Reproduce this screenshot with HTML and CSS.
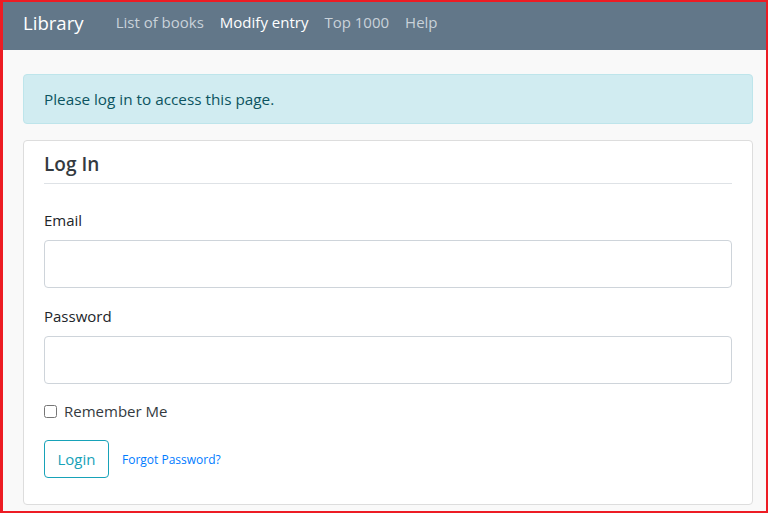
FILE: index.html
```html
<!DOCTYPE html>
<html>
<head>
<meta charset="utf-8">
<link rel="stylesheet" href="styles.css">
</head>
<body>
<div class="frame">
  <nav class="navbar">
    <span class="brand">Library</span>
    <a class="nav-link">List of books</a>
    <a class="nav-link active">Modify entry</a>
    <a class="nav-link">Top 1000</a>
    <a class="nav-link">Help</a>
  </nav>
  <main class="content">
    <div class="alert">Please log in to access this page.</div>
    <div class="card">
      <h2 class="card-title">Log In</h2>
      <div class="field first">
        <label class="label">Email</label>
        <input class="input" type="text">
      </div>
      <div class="field">
        <label class="label">Password</label>
        <input class="input" type="password">
      </div>
      <label class="check"><input type="checkbox" class="checkbox"> Remember Me</label>
      <div class="actions">
        <button class="btn">Login</button>
        <a class="forgot">Forgot Password?</a>
      </div>
    </div>
  </main>
</div>
</body>
</html>
```
FILE: styles.css
```css
* { box-sizing: border-box; }
html, body { margin: 0; padding: 0; background: #fff; }
body { font-family: "Open Sans", "Noto Sans", sans-serif; color: #212529; }
.frame {
  width: 768px;
  height: 513px;
  border: 2px solid #ed1c24;
  border-left-width: 3px;
  background: #f9f9f9;
  overflow: hidden;
}
.navbar {
  height: 48px;
  background: #627789;
  display: flex;
  align-items: center;
  padding-left: 20px;
  padding-bottom: 8px;
}
.brand { color: #fff; font-size: 18.6px; margin-right: 32px; }
.nav-link { color: #c9d2da; font-size: 15px; margin-right: 16px; }
.nav-link.active { color: #fff; }
.content { padding: 24px 13px 0 20px; }
.alert {
  background: #d1ecf1;
  border: 1px solid #bee5eb;
  color: #0c5460;
  border-radius: 4px;
  height: 50px;
  padding: 0 20px;
  display: flex;
  align-items: center;
  font-size: 15.3px;
}
.card {
  margin-top: 16px;
  background: #fff;
  border: 1px solid #ddd;
  border-radius: 4px;
  padding: 10px 20px 26px 20px;
  height: 365px;
}
.card-title {
  margin: 0;
  font-size: 19px;
  font-weight: 600;
  color: #343a40;
  padding-bottom: 6px;
  border-bottom: 1px solid #dee2e6;
}
.field { margin-top: 18px; }
.field.first { margin-top: 26px; }
.label { display: block; font-size: 15px; color: #212529; margin-bottom: 10px; }
.input {
  display: block;
  width: 100%;
  height: 48px;
  border: 1px solid #ced4da;
  border-radius: 4px;
  background: #fff;
}
.check {
  display: flex;
  align-items: center;
  gap: 7px;
  margin-top: 17px;
  font-size: 15px;
  color: #343a40;
}
.checkbox { margin: 0; width: 13px; height: 13px; }
.actions { display: flex; align-items: center; gap: 13px; margin-top: 19px; }
.btn {
  font-family: inherit;
  font-size: 15px;
  color: #17a2b8;
  background: #fff;
  border: 1px solid #17a2b8;
  border-radius: 4px;
  width: 65px;
  height: 38px;
}
.forgot { font-size: 12px; color: #007bff; }
```
